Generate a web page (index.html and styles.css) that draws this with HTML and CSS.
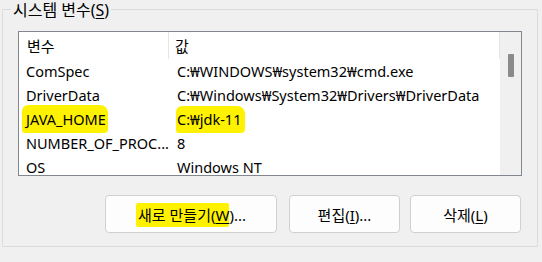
FILE: index.html
```html
<!DOCTYPE html>
<html lang="ko">
<head>
    <meta charset="UTF-8">
    <meta name="viewport" content="width=device-width, initial-scale=1.0">
    <title>시스템 변수</title>
    <link rel="stylesheet" href="styles.css">
</head>
<body>
    <div class="group">
        <div class="group-label">시스템 변수(<u>S</u>)</div>

        <div class="list">
            <div class="list-body">
                <div class="row header">
                    <div class="col-name">변수</div>
                    <div class="col-value">값</div>
                </div>
                <div class="row">
                    <div class="col-name">ComSpec</div>
                    <div class="col-value">C:₩WINDOWS₩system32₩cmd.exe</div>
                </div>
                <div class="row">
                    <div class="col-name">DriverData</div>
                    <div class="col-value">C:₩Windows₩System32₩Drivers₩DriverData</div>
                </div>
                <div class="row">
                    <div class="col-name"><span class="mark mark-name">JAVA_HOME</span></div>
                    <div class="col-value"><span class="mark mark-value">C:₩jdk-11</span></div>
                </div>
                <div class="row">
                    <div class="col-name">NUMBER_OF_PROC...</div>
                    <div class="col-value">8</div>
                </div>
                <div class="row">
                    <div class="col-name">OS</div>
                    <div class="col-value">Windows NT</div>
                </div>
            </div>
            <div class="scrollbar">
                <div class="thumb"></div>
            </div>
        </div>

        <div class="buttons">
            <button class="btn btn-new"><span class="mark mark-btn">새로 만들기(<u>W</u></span>)...</button>
            <button class="btn btn-edit">편집(<u>I</u>)...</button>
            <button class="btn btn-delete">삭제(<u>L</u>)</button>
        </div>
    </div>
</body>
</html>
```

FILE: styles.css
```css
/* General Styles */
body {
    margin: 0;
    padding-top: 9px;
    background-color: #f0f0f0;
    font-family: "Noto Sans", "Noto Sans CJK KR", sans-serif;
    font-size: 14.5px;
    color: #000;
}

u {
    text-decoration-thickness: 1px;
    text-underline-offset: 2px;
}

/* Group box */
.group {
    margin-left: 2px;
    padding: 0 15px;
    width: 536px;
    height: 238px;
    box-sizing: border-box;
    border: 1px solid #dcdcdc;
    position: relative;
}

.group-label {
    position: absolute;
    top: -10px;
    left: 8px;
    padding: 0 2px;
    background: #f0f0f0;
    font-size: 16px;
    line-height: 20px;
}

/* List view */
.list {
    margin-top: 21px;
    width: 504px;
    height: 145px;
    box-sizing: border-box;
    border: 1px solid #828790;
    background: #fff;
    display: flex;
    overflow: hidden;
}

.list-body {
    flex: 1;
    overflow: hidden;
}

.row {
    display: flex;
    height: 24px;
    align-items: center;
    white-space: nowrap;
}

.row.header {
    height: 27px;
    font-size: 15px;
}

.col-name {
    width: 150px;
    padding-left: 7px;
    box-sizing: border-box;
}

.col-value {
    flex: 1;
    padding-left: 8px;
}

.header .col-name {
    border-right: 1px solid #e5e5e5;
    height: 100%;
    display: flex;
    align-items: center;
    padding-left: 8px;
}

.header .col-value {
    height: 100%;
    display: flex;
    align-items: center;
    padding-left: 6px;
    border-right: 1px solid #e5e5e5;
}

.scrollbar {
    width: 21px;
    background: #f0f0f0;
    padding-top: 22px;
    box-sizing: border-box;
    display: flex;
    justify-content: center;
}

.thumb {
    width: 6px;
    height: 23px;
    background: #8b8b8b;
    border-radius: 1px;
}

/* Highlighter marks */
.mark {
    background: #fff200;
    border-radius: 6px 8px 4px 3px;
}

.mark-name {
    padding: 4px 2px 4px 4px;
    margin-left: -4px;
}

.mark-value {
    padding: 3px 4px 4px 1px;
    margin-left: -1px;
}

.mark-btn {
    padding: 2px 0 2px 2px;
    border-radius: 2px;
}

/* Buttons */
.buttons {
    display: flex;
    margin-top: 19px;
    margin-left: 87px;
}

.btn {
    height: 38px;
    width: 111px;
    border: 1px solid #d0d0d0;
    border-radius: 4px;
    background: #fdfdfd;
    font-family: inherit;
    font-size: 15px;
    color: #000;
    padding: 0;
}

.btn-new {
    width: 172px;
    margin-right: 12px;
}

.btn-edit {
    margin-right: 10px;
}
```
